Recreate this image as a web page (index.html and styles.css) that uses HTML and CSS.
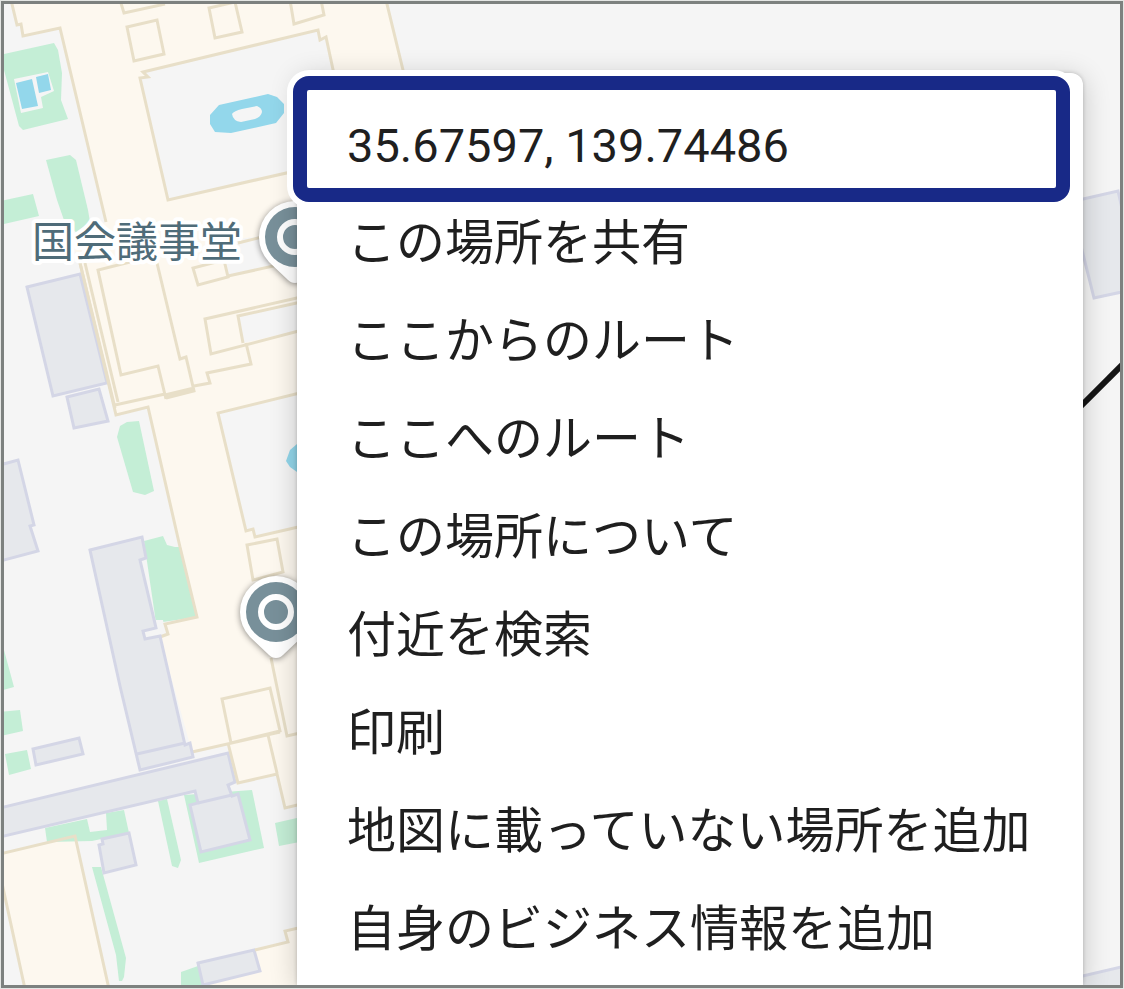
FILE: index.html
```
<!DOCTYPE html>
<html lang="ja">
<head>
    <meta charset="UTF-8">
    <meta name="viewport" content="width=device-width, initial-scale=1.0">
    <title>国会議事堂</title>
    <link rel="stylesheet" href="styles.css">
</head>
<body>
    <main class="mapFrame">
        <svg class="map" viewBox="4 4 1116 981" preserveAspectRatio="xMinYMin slice" role="img" aria-label="国会議事堂">
            <defs>
                <g id="pin">
                    <path class="pinShape" d="M0 46C-3 46-5 45-7 43L-26 25A36 36 0 1 1 26 25L7 43C5 45 3 46 0 46Z"/>
                    <circle class="pinDisc" r="30"/>
                    <circle class="pinRing" r="15"/>
                </g>
            </defs>

            <!-- main grounds -->
            <path class="ground" d="M11 0L17 25L21 24L23 36L60 28L106 222L70 238L80 263L115 415L148 407L197 617L165 624L168 634L160 637L192 752L228 743L238 783L277 774L285 808L420 790V140L386 0Z"/>
            <path class="ground" d="M0 854L75 836L109 989H25L0 880Z"/>
            <path class="ground" d="M320 923L285 931L288 942L255 951L190 989H320Z"/>

            <!-- courtyards -->
            <path class="yard" d="M143 72L318 30L320 40L326 37L352 158L168 200L140 78L148 77Z"/>
            <path class="yard" d="M320 388L218 413L246 531L253 529L255 537L320 522Z"/>
            <path class="lot" d="M225 240L262 236L270 266L228 276Z"/>
            <path class="lot" d="M239 316L310 300V328L243 343Z"/>

            <!-- rooms and walls -->
            <g class="wall">
                <path d="M120 0L124 13L165 4M290 0L294 24L324 15L321 0"/>
                <path d="M127 27L157 20L164 54L134 61ZM209 8L235 2L242 32L215 38Z"/>
                <path d="M80 263L115 408M85 263L118 402M115 405L165 394M130 262L98 270L121 375L158 366L166 399"/>
                <path d="M157 263L180 359L186 357L194 391L166 398M165 395L194 388"/>
                <path d="M194 386L210 383L207 373L251 364L246 343"/>
                <path d="M224 260L193 268L198 285L228 277L224 260M228 276L310 258M238 243L262 237"/>
                <path d="M310 295L205 319L211 354L310 328M243 343L238 316L310 300"/>
                <path d="M247 545L277 539L283 572L253 580Z"/>
                <path d="M222 699L270 688L280 731L231 743ZM192 752L280 732M268 735L277 773M271 658L287 736L300 733"/>
            </g>

            <!-- green areas -->
            <g class="green">
                <path d="M0 55L54 43L58 50L62 73L61 100L68 119L23 130L19 126Z"/>
                <path d="M46 160L70 155L76 160L88 210L90 222L76 232L66 226L57 200Z"/>
                <path d="M0 201L33 194L39 216L0 225Z"/>
                <path d="M120 426L127 422L139 421L154 491L145 495L133 492L117 437Z"/>
                <path d="M144 541L163 536L167 545L175 547H180L197 617L156 623Z"/>
                <path d="M0 640L4 650L14 687L0 691ZM0 712L20 710L23 731L0 736ZM5 754L27 750L31 769L9 775Z"/>
                <path d="M45 828L87 819L90 832L107 830L106 813L124 810L129 833L92 841L47 842Z"/>
                <path d="M158 801L167 799L181 860L178 868L172 866Z"/>
                <path d="M184 795L252 790L264 848L199 863Z"/>
                <path d="M275 823L310 815V840L279 846Z"/>
                <path d="M92 867H101L126 958L124 977L122 981H119L116 955Z"/>
                <path d="M181 989V972L198 966L206 989Z"/>
            </g>
            <path class="clear" d="M14 79L48 72L54 91L41 97L43 108L21 113ZM156 620H163L166 634L145 638L143 631L156 628Z"/>
            <path class="wallEdge" d="M180 547L197 617L165 624L168 634L160 637"/>

            <!-- buildings -->
            <g class="building">
                <path d="M27 287L80 274L107 383L53 396Z"/>
                <path d="M67 397L99 389L108 421L74 428Z"/>
                <path d="M0 465L18 460L34 525L30 526L38 551L0 561Z"/>
                <path d="M90 550L142 537L146 558L140 560L156 628L143 631L145 639L160 636L185 745L190 743L193 757L140 770L120 686Z"/>
                <path d="M137 754L185 743"/>
                <path d="M33 749L79 738L83 754L36 765Z"/>
                <path d="M0 808L228 753L235 782L228 785L232 796L238 794L250 840L201 852L190 805L198 803L195 791L0 837Z"/>
                <path d="M198 803L232 795"/>
                <path d="M99 845L103 844L102 839L129 833L136 865L104 873Z"/>
                <path d="M198 963L254 950L260 971L203 985Z"/>
                <path d="M1070 202L1118 191L1140 288L1094 298Z"/>
                <path d="M1070 979L1130 965V1000H1070Z"/>
            </g>

            <!-- ponds -->
            <g class="water">
                <path d="M16 83L32 79L38 106L22 109ZM36 77L48 74L51 90L39 93Z"/>
                <path fill-rule="evenodd" d="M210 115L219 105L268 94L277 97L284 104V113L276 123L231 133L215 132L210 124ZM232 114Q234 111 242 109L257 106Q262 108 262 112Q261 117 255 119L241 122Q233 121 232 114Z"/>
                <path d="M305 442L297 444L290 450L286 461L290 467L297 472L305 473Z"/>
            </g>

            <!-- outlines of the grounds -->
            <g class="outline">
                <path d="M11 0L17 25L21 24L23 36L60 28L106 222M80 263L116 415L148 407L180 547M228 743L238 783L277 774L285 808L310 802M386 0L420 140"/>
                <path d="M143 72L318 30L320 40L326 37L352 158L168 200L140 78L148 77Z"/>
                <path d="M320 388L218 413L246 531L253 529L255 537L320 522"/>
                <path d="M0 854L75 836L109 989M0 874L25 989M320 923L285 931L288 942L255 950"/>
            </g>
            <path class="rail" d="M1070 417L1130 357"/>

            <use href="#pin" x="295" y="237"/>
            <use href="#pin" x="276" y="612"/>
            <text class="placeName" x="32" y="257">国会議事堂</text>
        </svg>

        <ul class="contextMenu">
            <li class="highlight"><button type="button" class="menuItem coords">35.67597, 139.74486</button></li>
            <li><button type="button" class="menuItem">この場所を共有</button></li>
            <li><button type="button" class="menuItem">ここからのルート</button></li>
            <li><button type="button" class="menuItem">ここへのルート</button></li>
            <li><button type="button" class="menuItem">この場所について</button></li>
            <li><button type="button" class="menuItem">付近を検索</button></li>
            <li><button type="button" class="menuItem">印刷</button></li>
            <li><button type="button" class="menuItem">地図に載っていない場所を追加</button></li>
            <li><button type="button" class="menuItem">自身のビジネス情報を追加</button></li>
        </ul>
    </main>
</body>
</html>
```
FILE: styles.css
```
* {
    box-sizing: border-box;
}
body {
    margin: 0;
    padding: 1px;
    background-color: #e4e6e4;
    font-family: "Noto Sans CJK JP", sans-serif;
}
.mapFrame {
    position: relative;
    height: calc(100vh - 2px);
    border: 3px solid #7d817f;
    overflow: hidden;
    background-color: #f5f5f5;
}
.map {
    display: block;
    width: 100%;
    height: 100%;
}

/* Map colors */
.ground {
    fill: #fdf8ef;
}
.yard, .lot, .clear {
    fill: #f5f5f5;
}
.wall, .wallEdge, .outline {
    fill: none;
    stroke: #e8dfc8;
    stroke-width: 3;
}
.green {
    fill: #c4eed6;
}
.building {
    fill: #e6e8ec;
    stroke: #d4d6e6;
    stroke-width: 3;
}
.water {
    fill: #93d7eb;
}
.rail {
    stroke: #151515;
    stroke-width: 6;
}
.pinShape {
    fill: white;
    filter: drop-shadow(0 1px 3px rgba(0, 0, 0, 0.45));
}
.pinDisc {
    fill: #78909a;
}
.pinRing {
    fill: none;
    stroke: white;
    stroke-width: 6;
}
.placeName {
    font-size: 42px;
    fill: #4f6c79;
    stroke: white;
    stroke-width: 8;
    stroke-linejoin: round;
    paint-order: stroke;
}

/* Context menu over the map */
.contextMenu {
    position: absolute;
    top: 69px;
    bottom: 0;
    left: 293px;
    right: 37px;
    margin: 0;
    padding: 3px 0 0;
    list-style: none;
    background-color: white;
    border-radius: 12px 12px 0 0;
    box-shadow: 0 4px 28px rgba(0, 0, 0, 0.2), 0 0 4px rgba(0, 0, 0, 0.2);
}
.menuItem {
    display: block;
    width: 100%;
    height: 98px;
    padding: 0 50px;
    border: none;
    background: none;
    color: #1f1f1f;
    font-family: inherit;
    font-size: 49px;
    line-height: 98px;
    text-align: left;
    white-space: nowrap;
    cursor: pointer;
}
.highlight {
    margin: 0 13px -12px -4px;
    border: 14px solid #182987;
    border-radius: 16px;
    box-shadow: 0 0 0 6px white;
}
.coords {
    padding: 14px 40px 0;
    font-family: Roboto, sans-serif;
    font-size: 47px;
    line-height: 84px;
}
```
